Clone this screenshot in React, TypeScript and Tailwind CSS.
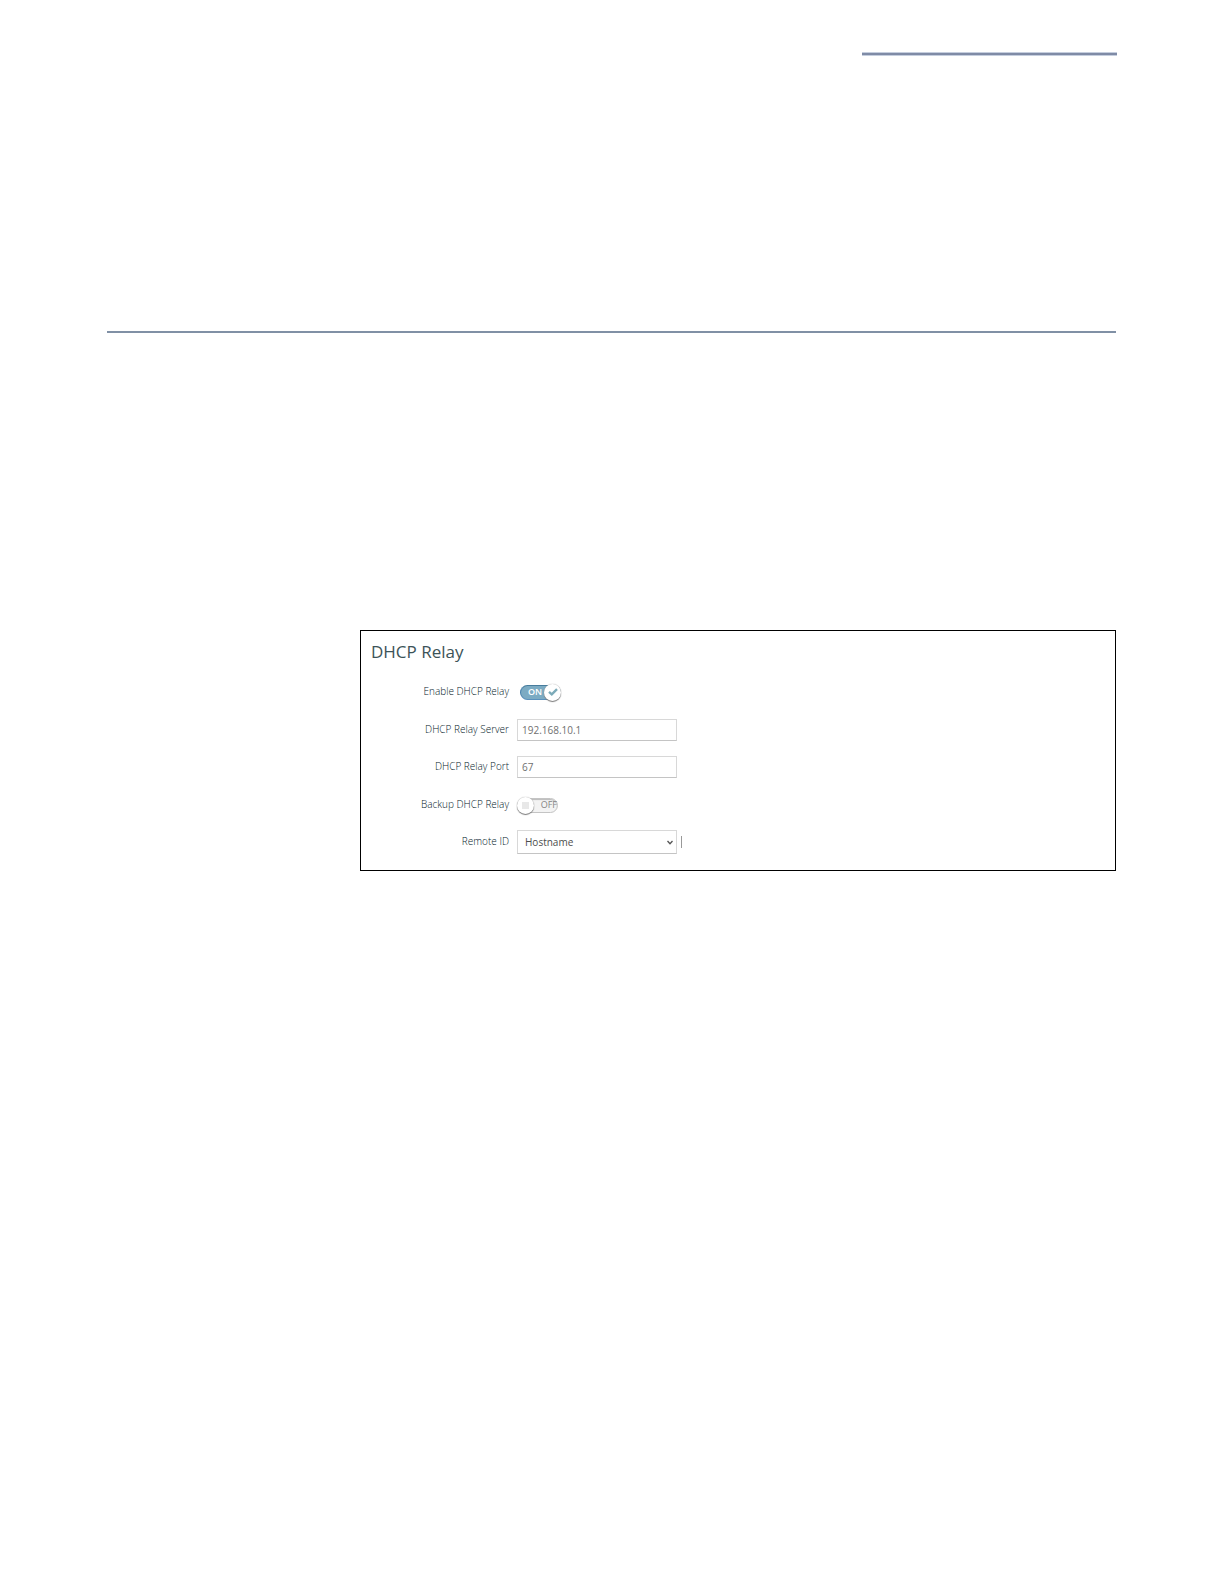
import { useState } from "react";
import type { ReactNode } from "react";

function Row({ id, label, children }: { id: string; label: string; children: ReactNode }) {
  return (
    <div className="flex h-[22px] items-center gap-2">
      <label htmlFor={id} className="w-[138px] pb-0.5 text-right text-[10px] leading-4 font-light text-[#06222b]">
        {label}
      </label>
      {children}
    </div>
  );
}

function Toggle({ id, initial }: { id: string; initial: boolean }) {
  const [on, setOn] = useState(initial);
  return (
    <button
      id={id}
      type="button"
      role="switch"
      aria-checked={on}
      onClick={() => setOn(!on)}
      className={
        on
          ? "ml-[3px] flex h-[15px] w-[41px] items-center justify-between rounded-full border border-t-[#477c9d] border-r-[#9ab8c8] border-b-[#5b91bd] border-l-[#4b83ad] bg-[#7cabc3] pl-[7px] text-[9px] font-semibold text-white"
          : "flex h-[15px] w-[41px] flex-row-reverse items-center justify-between rounded-full border border-[#c4c4c4] bg-[#f3f3f3] text-[9px] text-[#858585] shadow-[inset_0_1px_1px_#bbbbbb]"
      }
    >
      <span>{on ? "ON" : "OFF"}</span>
      <span className="-mx-px flex size-[17px] shrink-0 items-center justify-center rounded-full bg-white shadow-[0_1px_1px_#777777,0_0_1px_#999999]">
        {on ? (
          <svg viewBox="0 0 10 8" className="h-2 w-[10px]" fill="none" stroke="#7cabb9" strokeWidth="2.4">
            <path d="M1 3.8 3.8 6.3 9 1.2" />
          </svg>
        ) : (
          <span className="size-[7px] bg-[#e8e8e8]" />
        )}
      </span>
    </button>
  );
}

const field = "w-40 border border-[#d8d8d8] border-b-[#c4c4c4] bg-white text-[10px] outline-none";

export default function App() {
  return (
    <main className="min-h-screen bg-white pr-[108px] pl-[107px] font-['Open_Sans',sans-serif]">
      <header className="flex h-[333px] flex-col justify-between border-b-2 border-[#8090a5] pt-[52px]">
        <div className="-mr-px h-1 w-[255px] self-end border-y border-[#c5cede] bg-[#7f8ba6]" />
      </header>
      <form className="mt-[297px] ml-[253px] border border-black pb-[17px] pl-[10px]" onSubmit={(e) => e.preventDefault()}>
        <h1 className="pt-[9px] text-[17px] leading-6 text-[#3c5358]">DHCP Relay</h1>
        <div className="mt-[17px] flex flex-col gap-4">
          <Row id="enable" label="Enable DHCP Relay">
            <Toggle id="enable" initial={true} />
          </Row>
          <div className="flex flex-col gap-[15px]">
            <Row id="server" label="DHCP Relay Server">
              <input id="server" type="text" defaultValue="192.168.10.1" className={`${field} h-[22px] pl-1 text-[#707070]`} />
            </Row>
            <Row id="port" label="DHCP Relay Port">
              <input id="port" type="text" defaultValue="67" className={`${field} h-[22px] pl-1 text-[#707070]`} />
            </Row>
          </div>
          <div className="flex flex-col gap-[15px]">
            <Row id="backup" label="Backup DHCP Relay">
              <Toggle id="backup" initial={false} />
            </Row>
            <Row id="remote" label="Remote ID">
              <div className="relative flex items-center">
                <select id="remote" className={`${field} h-6 appearance-none pl-[7px] text-[#4d4d4d]`}>
                  <option>Hostname</option>
                </select>
                <svg viewBox="0 0 6 5" className="pointer-events-none absolute right-1 h-[5px] w-[6px]" fill="none" stroke="#555555" strokeWidth="1.3">
                  <path d="M.5 1 3 3.8 5.5 1" />
                </svg>
              </div>
              <span className="-ml-1 h-3 w-px bg-[#999999]" />
            </Row>
          </div>
        </div>
      </form>
    </main>
  );
}
